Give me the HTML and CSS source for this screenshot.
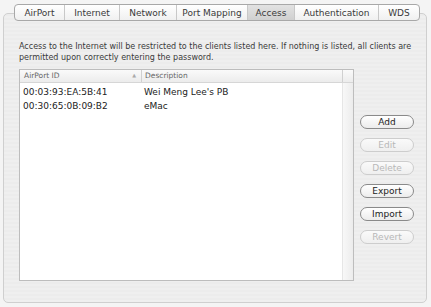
FILE: index.html
```html
<!DOCTYPE html>
<html>
<head>
    <meta charset="UTF-8">
    <title>AirPort Access</title>
    <link rel="stylesheet" href="styles.css">
</head>
<body>
    <div class="window">
        <div class="tabs">
            <span class="tab w-airport">AirPort</span>
            <span class="tab w-internet">Internet</span>
            <span class="tab w-network">Network</span>
            <span class="tab w-port">Port Mapping</span>
            <span class="tab w-access active">Access</span>
            <span class="tab w-auth">Authentication</span>
            <span class="tab w-wds">WDS</span>
        </div>
        <div class="panel">
            <p class="info">Access to the Internet will be restricted to the clients listed here. If nothing is listed, all clients are permitted upon correctly entering the password.</p>
            <div class="content">
                <div class="list">
                    <div class="head">
                        <span class="col-id">AirPort ID <span class="arrow">&#9650;</span></span>
                        <span class="col-desc">Description</span>
                        <span class="col-scroll"></span>
                    </div>
                    <div class="body">
                        <div class="rows">
                            <div class="row"><span class="col-id">00:03:93:EA:5B:41</span><span class="col-desc">Wei Meng Lee's PB</span></div>
                            <div class="row"><span class="col-id">00:30:65:0B:09:B2</span><span class="col-desc">eMac</span></div>
                        </div>
                        <div class="scroll"></div>
                    </div>
                </div>
                <div class="buttons">
                    <button>Add</button>
                    <button disabled>Edit</button>
                    <button disabled>Delete</button>
                    <button>Export</button>
                    <button>Import</button>
                    <button disabled>Revert</button>
                </div>
            </div>
        </div>
    </div>
</body>
</html>
```

FILE: styles.css
```css
body {
    margin: 0;
    background: #f4f4f4;
    font-family: "DejaVu Sans", sans-serif;
    font-size: 8px;
    color: #333;
}
.window {
    position: relative;
    width: 431px;
    height: 307px;
    padding: 13px 4px 0 3px;
    box-sizing: border-box;
}
.tabs {
    position: absolute;
    top: 4px;
    left: 14px;
    display: flex;
    height: 17px;
    border: 1px solid #a8a8a8;
    border-radius: 4px;
    background: linear-gradient(#ffffff, #f0f0f0);
    box-sizing: border-box;
    z-index: 1;
}
.tab {
    display: flex;
    align-items: center;
    justify-content: center;
    border-left: 1px solid #c8c8c8;
    font-size: 9px;
    color: #3a3a3a;
}
.tab:first-child { border-left: none; }
.tab.active {
    background: linear-gradient(#e2e2e2, #d0d0d0);
}
.w-airport { width: 49px; }
.w-internet { width: 54px; }
.w-network { width: 56px; }
.w-port { width: 70px; }
.w-access { width: 46px; }
.w-auth { width: 83px; }
.w-wds { width: 40px; }
.panel {
    height: 290px;
    border: 1px solid #cfcfcf;
    border-radius: 5px;
    background: repeating-linear-gradient(#ececec 0, #ececec 2px, #efefef 2px, #efefef 4px);
    box-sizing: border-box;
    padding: 27px 0 0 15px;
}
.info {
    margin: 0;
    width: 400px;
    line-height: 11px;
    color: #3a3a3a;
}
.content {
    display: flex;
    margin-top: 6px;
}
.list {
    width: 335px;
    height: 212px;
    border: 1px solid #bdbdbd;
    background: #fff;
    display: flex;
    flex-direction: column;
    box-sizing: border-box;
}
.head {
    display: flex;
    height: 12px;
    border-bottom: 1px solid #d6d6d6;
    background: linear-gradient(#fafafa, #ececec);
    color: #666;
    font-size: 7.5px;
    line-height: 11px;
}
.head .col-id {
    position: relative;
    width: 117px;
    padding-left: 4px;
    border-right: 1px solid #d0d0d0;
}
.arrow {
    position: absolute;
    right: 5px;
    font-size: 5px;
    color: #aaa;
}
.head .col-desc {
    flex: 1;
    padding-left: 3px;
    border-right: 1px solid #d0d0d0;
}
.col-scroll { width: 10px; }
.body {
    flex: 1;
    display: flex;
}
.rows {
    flex: 1;
    padding-top: 2px;
}
.scroll {
    width: 10px;
    border-left: 1px solid #e6e6e6;
    background: linear-gradient(90deg, #f8f8f8, #ececec);
}
.row {
    display: flex;
    height: 14px;
    line-height: 14px;
    font-size: 9px;
    color: #222;
}
.row .col-id {
    width: 121px;
    padding-left: 3px;
}
.row .col-desc { flex: 1; }
.buttons {
    display: flex;
    flex-direction: column;
    gap: 9px;
    margin: 46px 0 0 6px;
}
button {
    width: 54px;
    height: 14px;
    padding: 0;
    border: 1px solid #8a8a8a;
    border-radius: 7px;
    background: linear-gradient(#ffffff, #ececec);
    font-family: "DejaVu Sans", sans-serif;
    font-size: 9px;
    color: #222;
}
button:disabled {
    border-color: #cdcdcd;
    color: #b8b8b8;
    background: linear-gradient(#fafafa, #efefef);
}
```
